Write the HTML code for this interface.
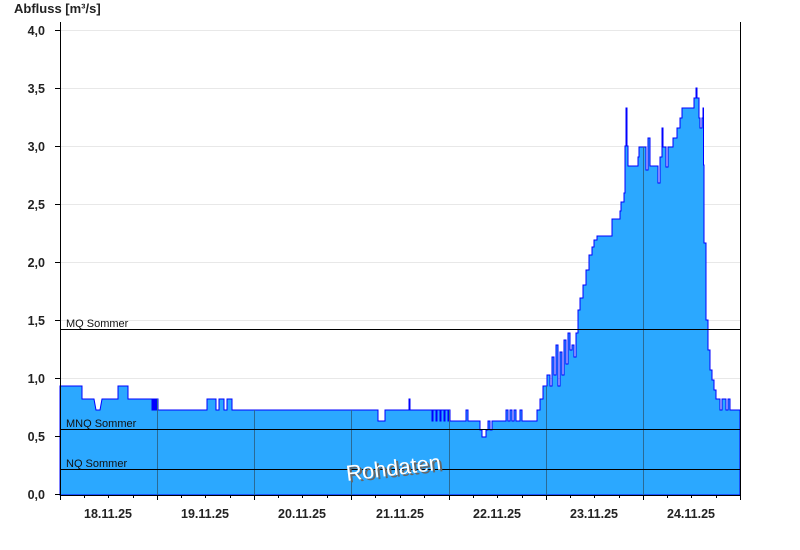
<!DOCTYPE html>
<html><head><meta charset="utf-8"><style>
html,body{margin:0;padding:0;background:#fff;width:800px;height:550px;overflow:hidden}
svg text{font-family:"Liberation Sans",Arial,sans-serif}
</style></head><body>
<svg width="800" height="550" viewBox="0 0 800 550" xmlns="http://www.w3.org/2000/svg">
<defs>
<clipPath id="c"><path id="p" d="M60,495 L60,386 H82 V399 H94 L96,410 H100 L102,399 H118 V386 H128 V399 H152 V410 H153 V399 H154 V410 H155 V399 H156 V410 H157 V399 H158 V410 H207 V399 H216 V410 H219 V399 H224 V410 H227 V399 H232 V410 H378 V421 H385 V410 H409 V399 H410 V410 H432 V421 H433 V410 H436 V421 H437 V410 H440 V421 H441 V410 H444 V421 H445 V410 H448 V421 H449 V410 H450 V421 H466 V410 H468 V421 H480 V430 H482 V437 H486 V430 H488 V421 H490 V430 H492 V421 H506 V410 H508 V421 H510 V410 H512 V421 H514 V410 H516 V421 H520 V410 H522 V421 H537 V410 H540 V399 H543 V386 H547 V375 H550 V386 H552 V357 H554 V375 H556 V345 H558 V386 H560 V352 H562 V375 H564 V340 H566 V364 H568 V333 H570 V350 H572 V345 H574 V357 H576 V333 H578 V310 H580 V298 H583 V285 H586 V270 H589 V255 H592 V247 H594 V240 H597 V236 H612 V219 H620 V211 H621 V202 H624 V193 H625 V146 H626 V108 H627 V146 H628 V166 H638 V157 H639 V147 H646 V170 H648 V138 H650 V166 H658 V183 H660 V157 H662 V128 H663 V147 H666 V167 H668 V147 H673 V138 H677 V128 H680 V118 H682 V108 H694 V98 H696 V88 H697 V98 H699 V118 H700 V128 H702 V118 H703 V108 H703.5 V165 H704 V243 H706 V320 H708 V350 H710 V370 H712 V380 H714 V390 H716 V399 H720 V410 H722 V399 H726 V410 H728 V399 H730 V410 H740 V495 Z"/></clipPath>
</defs>
<g stroke="#e8e8e8" stroke-width="1">
<line x1="60" y1="30.5" x2="740" y2="30.5"/><line x1="60" y1="88.5" x2="740" y2="88.5"/><line x1="60" y1="146.5" x2="740" y2="146.5"/><line x1="60" y1="204.5" x2="740" y2="204.5"/><line x1="60" y1="262.5" x2="740" y2="262.5"/><line x1="60" y1="320.5" x2="740" y2="320.5"/><line x1="60" y1="378.5" x2="740" y2="378.5"/><line x1="60" y1="436.5" x2="740" y2="436.5"/>
</g>
<use href="#p" fill="#2ba8ff" stroke="#0000ff" stroke-width="1"/>
<g clip-path="url(#c)" stroke="#2a6a96" stroke-width="1">
<line x1="157.5" y1="0" x2="157.5" y2="495"/><line x1="254.5" y1="0" x2="254.5" y2="495"/><line x1="351.5" y1="0" x2="351.5" y2="495"/><line x1="449.5" y1="0" x2="449.5" y2="495"/><line x1="546.5" y1="0" x2="546.5" y2="495"/><line x1="643.5" y1="0" x2="643.5" y2="495"/>
</g>
<g stroke="#000" stroke-width="1">
<line x1="60" y1="329.5" x2="740" y2="329.5"/><line x1="60" y1="429.5" x2="740" y2="429.5"/><line x1="60" y1="469.5" x2="740" y2="469.5"/>
<line x1="60.5" y1="22" x2="60.5" y2="500"/><line x1="740.5" y1="22" x2="740.5" y2="495"/><line x1="60" y1="495.5" x2="740" y2="495.5"/>
<line x1="55" y1="30.5" x2="60" y2="30.5"/><line x1="55" y1="88.5" x2="60" y2="88.5"/><line x1="55" y1="146.5" x2="60" y2="146.5"/><line x1="55" y1="204.5" x2="60" y2="204.5"/><line x1="55" y1="262.5" x2="60" y2="262.5"/><line x1="55" y1="320.5" x2="60" y2="320.5"/><line x1="55" y1="378.5" x2="60" y2="378.5"/><line x1="55" y1="436.5" x2="60" y2="436.5"/><line x1="55" y1="494.5" x2="60" y2="494.5"/>
<line x1="84.5" y1="495" x2="84.5" y2="498"/><line x1="108.5" y1="495" x2="108.5" y2="498"/><line x1="133.5" y1="495" x2="133.5" y2="498"/><line x1="157.5" y1="495" x2="157.5" y2="500"/>
<line x1="181.5" y1="495" x2="181.5" y2="498"/><line x1="205.5" y1="495" x2="205.5" y2="498"/><line x1="230.5" y1="495" x2="230.5" y2="498"/><line x1="254.5" y1="495" x2="254.5" y2="500"/>
<line x1="278.5" y1="495" x2="278.5" y2="498"/><line x1="302.5" y1="495" x2="302.5" y2="498"/><line x1="327.5" y1="495" x2="327.5" y2="498"/><line x1="351.5" y1="495" x2="351.5" y2="500"/>
<line x1="375.5" y1="495" x2="375.5" y2="498"/><line x1="400.5" y1="495" x2="400.5" y2="498"/><line x1="424.5" y1="495" x2="424.5" y2="498"/><line x1="449.5" y1="495" x2="449.5" y2="500"/>
<line x1="473.5" y1="495" x2="473.5" y2="498"/><line x1="497.5" y1="495" x2="497.5" y2="498"/><line x1="522.5" y1="495" x2="522.5" y2="498"/><line x1="546.5" y1="495" x2="546.5" y2="500"/>
<line x1="570.5" y1="495" x2="570.5" y2="498"/><line x1="594.5" y1="495" x2="594.5" y2="498"/><line x1="619.5" y1="495" x2="619.5" y2="498"/><line x1="643.5" y1="495" x2="643.5" y2="500"/>
<line x1="667.5" y1="495" x2="667.5" y2="498"/><line x1="691.5" y1="495" x2="691.5" y2="498"/><line x1="716.5" y1="495" x2="716.5" y2="498"/><line x1="740.5" y1="495" x2="740.5" y2="500"/>
</g>
<text x="14" y="13" font-size="13" font-weight="bold" fill="#222">Abfluss [m³/s]</text>
<g font-size="12.5" font-weight="bold" fill="#222" text-anchor="end">
<text x="45" y="35">4,0</text><text x="45" y="93">3,5</text><text x="45" y="151">3,0</text><text x="45" y="209">2,5</text><text x="45" y="267">2,0</text><text x="45" y="325">1,5</text><text x="45" y="383">1,0</text><text x="45" y="441">0,5</text><text x="45" y="499">0,0</text>
</g>
<g font-size="12.5" font-weight="bold" fill="#222" text-anchor="middle">
<text x="108" y="518">18.11.25</text><text x="205" y="518">19.11.25</text><text x="302" y="518">20.11.25</text><text x="400" y="518">21.11.25</text><text x="497" y="518">22.11.25</text><text x="594" y="518">23.11.25</text><text x="691" y="518">24.11.25</text>
</g>
<g font-size="11" fill="#111">
<text x="66" y="327">MQ Sommer</text><text x="66" y="427">MNQ Sommer</text><text x="66" y="467">NQ Sommer</text>
</g>
<g transform="translate(347,481) rotate(-7)" font-size="22">
<text x="2" y="2" fill="#666">Rohdaten</text>
<text x="0" y="0" fill="#fff">Rohdaten</text>
</g>
</svg>
</body></html>
